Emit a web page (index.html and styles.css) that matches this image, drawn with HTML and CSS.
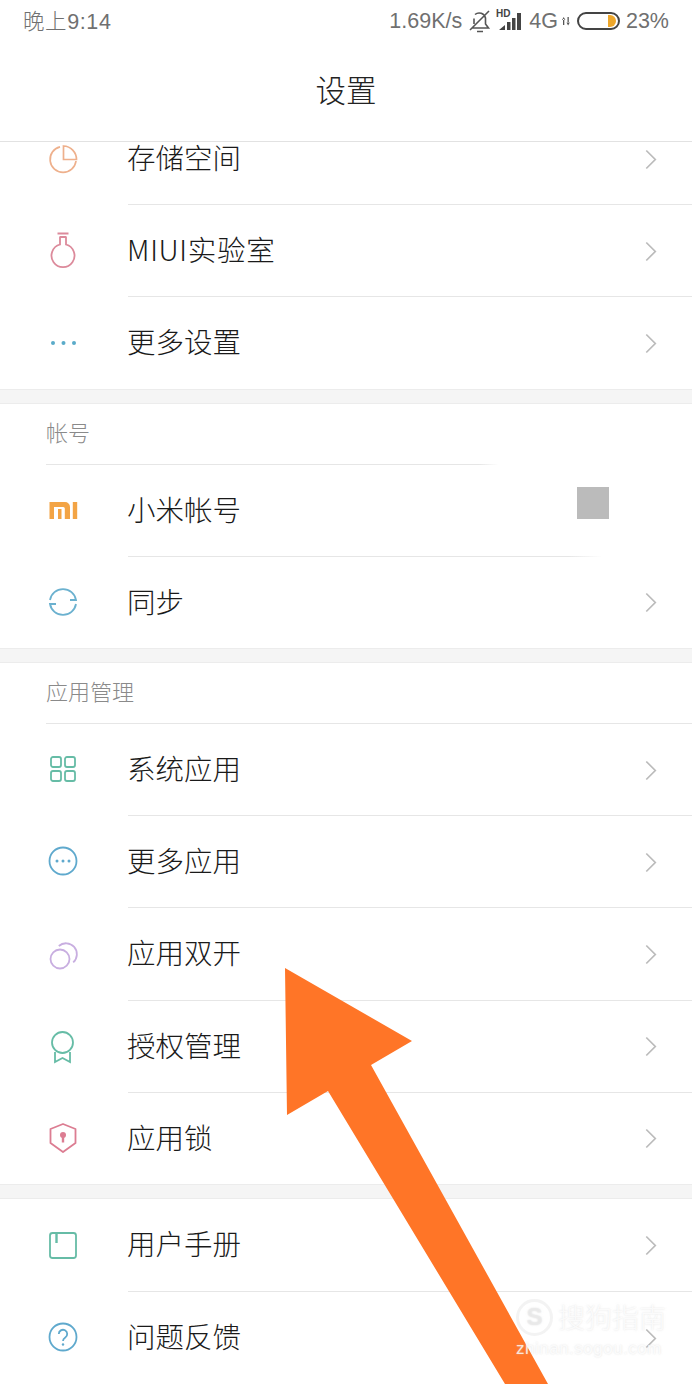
FILE: index.html
```html
<!DOCTYPE html>
<html lang="zh">
<head>
    <meta charset="UTF-8">
    <title>设置</title>
    <link rel="stylesheet" href="styles.css">
</head>

<body>
    <div class="phone">
        <div class="top">
            <div class="status">
                <span class="time">晚上9:14</span>
                <div class="status_right">
                    <span>1.69K/s</span>
                    <svg class="mute" width="22" height="24" viewBox="0 0 22 24" fill="none" stroke="#555" stroke-width="1.600"><path d="M6 5.500A6.500 6.500 0 0 1 16.500 9v6l3 4H3.500M5 9.500V15M1 21 20 2M8 22.500h6"/></svg>
                    <svg class="signal" width="26" height="28" viewBox="0 0 26 28"><text x="0" y="10" class="hd">HD</text><path fill="#444" d="M3 23l6-5v5zM11 23v-8h3.500v8zM16 23V11h3.500v12zM21 23V6h4v17z"/></svg>
                    <span class="net">4G</span>
                    <svg class="updown" width="8" height="10" viewBox="0 0 8 10"><path fill="#555" d="M1 3v6h1.300V3zM0 4l1.700-3 1.700 3zM5.500 1v6h1.300V1zM4.500 6.500h3.300L6.100 9.500z"/></svg>
                    <div class="battery"><i></i></div>
                    <span class="percent">23%</span>
                </div>
            </div>
            <div class="title">设置</div>
        </div>

        <div class="list">
            <div class="group first">
                <div class="row">
                    <svg class="icon" viewBox="0 0 30 30" fill="none" stroke="#eeb08c" stroke-width="1.700"><path d="M12 3.800A13 13 0 1 0 28 18M15.500 3v13.500h13A13.500 13.500 0 0 0 15.500 3z"/></svg>
                    <div class="row_body"><span>存储空间</span><svg class="arrow" viewBox="0 0 14 24"><path d="M1.500 1.500 12 12 1.500 22.500"/></svg></div>
                </div>
                <div class="row">
                    <svg class="icon" viewBox="0 0 30 30" fill="none" stroke="#dc8a9b" stroke-width="1.800"><path d="M9.500-1.500h11M11.500 2h7M12 2v7.500a11.500 11.500 0 1 0 6 0V2"/></svg>
                    <div class="row_body"><span class="latin">MIUI实验室</span><svg class="arrow" viewBox="0 0 14 24"><path d="M1.500 1.500 12 12 1.500 22.500"/></svg></div>
                </div>
                <div class="row">
                    <svg class="icon" viewBox="0 0 30 30" fill="#5aabc9"><circle cx="5" cy="16" r="2"/><circle cx="15.500" cy="16" r="2"/><circle cx="26" cy="16" r="2"/></svg>
                    <div class="row_body"><span>更多设置</span><svg class="arrow" viewBox="0 0 14 24"><path d="M1.500 1.500 12 12 1.500 22.500"/></svg></div>
                </div>
            </div>

            <div class="group">
                <div class="group_name">帐号</div>
                <div class="row">
                    <svg class="icon" viewBox="0 0 30 30" fill="#f3a445"><path d="M1.500 7H17a5 5 0 0 1 5 5v12h-5.200V13.500a1.500 1.500 0 0 0-1.500-1.500H6v12H1.500zM10 14h3.500v10H10zM24.800 7h4.400v17h-4.400z"/></svg>
                    <div class="row_body fade_short"><span>小米帐号</span><div class="blank"></div></div>
                </div>
                <div class="row">
                    <svg class="icon" viewBox="0 0 30 30" fill="none" stroke="#6bb1cf" stroke-width="1.800"><path d="M2 13A13.200 13.200 0 0 1 28 13h-6M28 17A13.200 13.200 0 0 1 2 17h6"/></svg>
                    <div class="row_body fade_long"><span>同步</span><svg class="arrow" viewBox="0 0 14 24"><path d="M1.500 1.500 12 12 1.500 22.500"/></svg></div>
                </div>
            </div>

            <div class="group">
                <div class="group_name">应用管理</div>
                <div class="row">
                    <svg class="icon" viewBox="0 0 30 30" fill="none" stroke="#66bca6" stroke-width="1.800"><rect x="3" y="3" width="10" height="10" rx="2"/><rect x="17" y="3" width="10" height="10" rx="2"/><rect x="3" y="17" width="10" height="10" rx="2"/><rect x="17" y="17" width="10" height="10" rx="2"/></svg>
                    <div class="row_body"><span>系统应用</span><svg class="arrow" viewBox="0 0 14 24"><path d="M1.500 1.500 12 12 1.500 22.500"/></svg></div>
                </div>
                <div class="row">
                    <svg class="icon" viewBox="0 0 30 30" fill="none" stroke="#5fa9cd" stroke-width="1.800"><circle cx="15" cy="15" r="13.500"/><g fill="#5fa9cd" stroke="none"><circle cx="9" cy="15" r="1.500"/><circle cx="15" cy="15" r="1.500"/><circle cx="21" cy="15" r="1.500"/></g></svg>
                    <div class="row_body"><span>更多应用</span><svg class="arrow" viewBox="0 0 14 24"><path d="M1.500 1.500 12 12 1.500 22.500"/></svg></div>
                </div>
                <div class="row">
                    <svg class="icon" viewBox="0 0 30 30" fill="none" stroke="#c8aee0" stroke-width="1.800"><circle cx="12" cy="21" r="9.500"/><path d="M10.800 8A10 10 0 0 1 25.200 24.300"/></svg>
                    <div class="row_body"><span>应用双开</span><svg class="arrow" viewBox="0 0 14 24"><path d="M1.500 1.500 12 12 1.500 22.500"/></svg></div>
                </div>
                <div class="row">
                    <svg class="icon" viewBox="0 0 30 30" fill="none" stroke="#66bca6" stroke-width="1.800"><circle cx="14.500" cy="11.500" r="10.500"/><path d="M7 21v10l7.500-4 7.500 4V21"/></svg>
                    <div class="row_body"><span>授权管理</span><svg class="arrow" viewBox="0 0 14 24"><path d="M1.500 1.500 12 12 1.500 22.500"/></svg></div>
                </div>
                <div class="row">
                    <svg class="icon" viewBox="0 0 30 30" fill="none" stroke="#dc7d92" stroke-width="1.800" stroke-linejoin="round"><path d="M15 1 27.500 6v14L15 29 2.500 20V6z"/><circle cx="15" cy="12" r="3" fill="#dc7d92" stroke="none"/><path d="M15 12v7.500" stroke-width="2.400"/></svg>
                    <div class="row_body"><span>应用锁</span><svg class="arrow" viewBox="0 0 14 24"><path d="M1.500 1.500 12 12 1.500 22.500"/></svg></div>
                </div>
            </div>

            <div class="group last">
                <div class="row">
                    <svg class="icon" viewBox="0 0 30 30" fill="none" stroke="#66bca6" stroke-width="1.800"><rect x="2" y="3" width="26" height="25" rx="2.500"/><path d="M8.500 3v10" stroke-width="2.400"/></svg>
                    <div class="row_body"><span>用户手册</span><svg class="arrow" viewBox="0 0 14 24"><path d="M1.500 1.500 12 12 1.500 22.500"/></svg></div>
                </div>
                <div class="row">
                    <svg class="icon" viewBox="0 0 30 30" fill="none" stroke="#5fa9cd" stroke-width="1.800"><circle cx="15" cy="15" r="13.500"/><path d="M10.800 12a4.200 4.200 0 1 1 6.500 3.500c-1.500 1-2.300 1.800-2.300 3.500"/><circle cx="15" cy="22.500" r="1.200" fill="#5fa9cd" stroke="none"/></svg>
                    <div class="row_body"><span>问题反馈</span><svg class="arrow" viewBox="0 0 14 24"><path d="M1.500 1.500 12 12 1.500 22.500"/></svg></div>
                </div>
            </div>
        </div>

        <svg class="pointer" width="692" height="1384" viewBox="0 0 692 1384"><path fill="#ff7527" d="M285 968 412 1041 371 1065 548 1384H505L328 1091 287 1115z"/></svg>

        <div class="mark">
            <div class="mark_top">
                <div class="mark_logo">S</div>
                <span>搜狗指南</span>
            </div>
            <div class="mark_url">zhinan.sogou.com</div>
        </div>
    </div>
</body>

</html>
```

FILE: styles.css
```css
*{margin: 0;padding: 0;box-sizing: border-box;}
body{
    background: #fff;
    font-family: "Noto Sans CJK SC", "Liberation Sans", sans-serif;
    font-weight: 300;
    overflow: hidden;
}
.phone{
    position: relative;
    width: 692px;
    height: 1384px;
    overflow: hidden;
    display: flex;
    flex-direction: column;
}
.top{
    height: 142px;
    flex-shrink: 0;
    border-bottom: 1px solid #e2e2e2;
    background: #fff;
}
.status{
    height: 42px;
    padding: 0 23px;
    display: flex;
    justify-content: space-between;
    align-items: center;
    font-family: "Liberation Sans", "Noto Sans CJK SC", sans-serif;
    font-size: 21.500px;
    color: #707070;
}
.time{
    margin-bottom: 4px;
    letter-spacing: .6px;
}
.status_right{
    display: flex;
    align-items: center;
}
.mute{
    margin-left: 7px;
}
.signal{
    margin-left: 5px;
}
.hd{
    font: bold 10px "Liberation Sans", sans-serif;
    fill: #444;
}
.net{
    margin-left: 7px;
}
.updown{
    margin-left: 4px;
}
.battery{
    position: relative;
    width: 43px;
    height: 18px;
    margin-left: 7px;
    border: 2px solid #444;
    border-radius: 9px;
}
.battery i{
    position: absolute;
    right: 2px;
    top: 1px;
    width: 8px;
    height: 12px;
    background: #eea72b;
    border-radius: 0 6px 6px 0;
}
.percent{
    margin-left: 6px;
}
.title{
    height: 99px;
    padding-bottom: 5px;
    display: flex;
    align-items: center;
    justify-content: center;
    font-size: 30.500px;
    color: #222;
}
.list{
    flex: 1;
    background: #f5f5f5;
}
.group{
    background: #fff;
    border-top: 1px solid #ececec;
    border-bottom: 1px solid #ececec;
    margin-bottom: 13px;
}
.first{
    border-top: 0;
}
.last{
    border-bottom: 0;
    margin-bottom: 0;
    padding-bottom: 4px;
}
.group_name{
    height: 60px;
    padding: 0 0 5px 46px;
    display: flex;
    align-items: center;
    font-size: 22px;
    color: #8a8a8a;
}
.row{
    height: 92.200px;
    display: flex;
    align-items: center;
}
.icon{
    width: 30px;
    height: 30px;
    margin: 0 33px 0 48px;
    flex-shrink: 0;
    overflow: visible;
}
.row_body{
    flex: 1;
    align-self: stretch;
    border-top: 1px solid #e6e6e6;
    padding: 0 35px 3px 0;
    margin-left: 17px;
    display: flex;
    align-items: center;
    justify-content: space-between;
    font-size: 28.500px;
    line-height: 30px;
    color: #1a1a1a;
}
.row_body span{
    margin-left: -1px;
}
.row_body .latin{
    letter-spacing: .7px;
}
/* the list is scrolled: only the lower part of its first row shows */
.first .row:first-child{
    height: 62.200px;
}
.first .row:first-child .icon{
    margin-top: -30px;
}
.first .row:first-child .row_body{
    border-top: 0;
    padding-bottom: 32px;
}
.last .row:first-child .row_body{
    border-top: 0;
}
/* line under a section name starts at the name, not at the row text */
.group_name + .row .row_body{
    margin-left: -65px;
    padding-left: 82px;
}
.arrow{
    width: 12px;
    height: 21px;
    margin-top: 4px;
    fill: none;
    stroke: #bbb;
    stroke-width: 2;
}
.blank{
    width: 32px;
    height: 32px;
    margin: 0 48px 12px 0;
    background: #bbb;
}
.fade_short{
    border-image: linear-gradient(90deg, #e6e6e6 67%, #fff 70%) 1;
}
.fade_long{
    border-image: linear-gradient(90deg, #e6e6e6 78%, #fff 84%) 1;
}
.pointer{
    position: absolute;
    left: 0;
    top: 0;
}
.mark{
    position: absolute;
    left: 516px;
    top: 1298px;
    width: 156px;
    color: rgba(255,255,255,.8);
    text-shadow: 0 0 2px rgba(200,200,200,.55);
}
.mark_top{
    display: flex;
    align-items: center;
    gap: 5px;
    font-size: 27px;
    line-height: 38px;
}
.mark_logo{
    width: 37px;
    height: 37px;
    border: 3px solid rgba(235,235,235,.6);
    border-radius: 50%;
    display: flex;
    align-items: center;
    justify-content: center;
    font: bold 24px "Liberation Sans", sans-serif;
    color: rgba(235,235,235,.7);
    flex-shrink: 0;
}
.mark_url{
    font: 17px/18px "Liberation Sans", sans-serif;
    letter-spacing: .5px;
    margin-top: 4px;
}
```
